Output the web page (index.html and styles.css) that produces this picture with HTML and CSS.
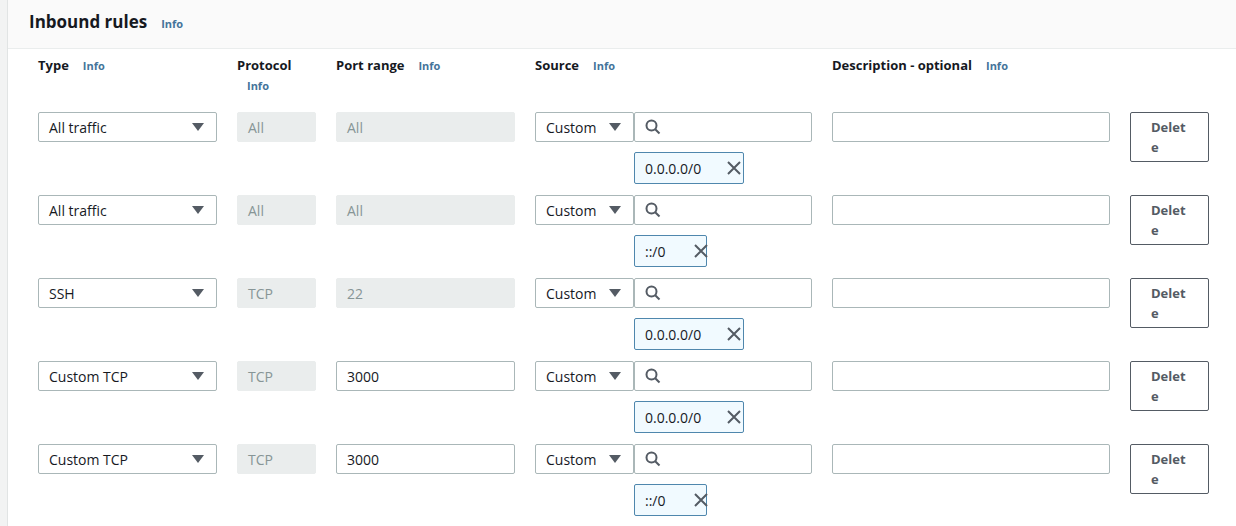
FILE: index.html
```html
<!DOCTYPE html>
<html>
<head>
<meta charset="utf-8">
<link rel="stylesheet" href="styles.css">
</head>
<body>
<div class="panel">
  <div class="panel-head">
    <h2 class="title">Inbound rules</h2><a class="info info-head">Info</a>
  </div>
  <div class="rules">
    <div class="grid header">
      <div class="hcell"><span class="hlabel">Type</span><a class="info">Info</a></div>
      <div class="hcell stack"><span class="hlabel">Protocol</span><a class="info info-under">Info</a></div>
      <div class="hcell"><span class="hlabel">Port range</span><a class="info">Info</a></div>
      <div class="hcell"><span class="hlabel">Source</span><a class="info">Info</a></div>
      <div class="hcell"><span class="hlabel">Description - optional</span><a class="info">Info</a></div>
      <div></div>
    </div>

    <div class="grid row">
      <div class="select"><span>All traffic</span><span class="caret"></span></div>
      <div class="field disabled">All</div>
      <div class="field disabled">All</div>
      <div class="source">
        <div class="source-line">
          <div class="select src-select"><span>Custom</span><span class="caret"></span></div>
          <div class="field search"><svg width="16" height="16" viewBox="0 0 16 16"><circle cx="6.5" cy="6.5" r="5" fill="none" stroke="#545b64" stroke-width="2"/><line x1="10.2" y1="10.2" x2="14.5" y2="14.5" stroke="#545b64" stroke-width="2"/></svg></div>
        </div>
        <div class="chip"><span>0.0.0.0/0</span><svg class="x" width="16" height="16" viewBox="0 0 16 16"><path d="M2 2 L14 14 M14 2 L2 14" stroke="#545b64" stroke-width="2" fill="none"/></svg></div>
      </div>
      <div class="field"></div>
      <button class="delete"><span>Delete</span></button>
    </div>

    <div class="grid row">
      <div class="select"><span>All traffic</span><span class="caret"></span></div>
      <div class="field disabled">All</div>
      <div class="field disabled">All</div>
      <div class="source">
        <div class="source-line">
          <div class="select src-select"><span>Custom</span><span class="caret"></span></div>
          <div class="field search"><svg width="16" height="16" viewBox="0 0 16 16"><circle cx="6.5" cy="6.5" r="5" fill="none" stroke="#545b64" stroke-width="2"/><line x1="10.2" y1="10.2" x2="14.5" y2="14.5" stroke="#545b64" stroke-width="2"/></svg></div>
        </div>
        <div class="chip short"><span>::/0</span><svg class="x" width="16" height="16" viewBox="0 0 16 16"><path d="M2 2 L14 14 M14 2 L2 14" stroke="#545b64" stroke-width="2" fill="none"/></svg></div>
      </div>
      <div class="field"></div>
      <button class="delete"><span>Delete</span></button>
    </div>

    <div class="grid row">
      <div class="select"><span>SSH</span><span class="caret"></span></div>
      <div class="field disabled">TCP</div>
      <div class="field disabled">22</div>
      <div class="source">
        <div class="source-line">
          <div class="select src-select"><span>Custom</span><span class="caret"></span></div>
          <div class="field search"><svg width="16" height="16" viewBox="0 0 16 16"><circle cx="6.5" cy="6.5" r="5" fill="none" stroke="#545b64" stroke-width="2"/><line x1="10.2" y1="10.2" x2="14.5" y2="14.5" stroke="#545b64" stroke-width="2"/></svg></div>
        </div>
        <div class="chip"><span>0.0.0.0/0</span><svg class="x" width="16" height="16" viewBox="0 0 16 16"><path d="M2 2 L14 14 M14 2 L2 14" stroke="#545b64" stroke-width="2" fill="none"/></svg></div>
      </div>
      <div class="field"></div>
      <button class="delete"><span>Delete</span></button>
    </div>

    <div class="grid row">
      <div class="select"><span>Custom TCP</span><span class="caret"></span></div>
      <div class="field disabled">TCP</div>
      <div class="field">3000</div>
      <div class="source">
        <div class="source-line">
          <div class="select src-select"><span>Custom</span><span class="caret"></span></div>
          <div class="field search"><svg width="16" height="16" viewBox="0 0 16 16"><circle cx="6.5" cy="6.5" r="5" fill="none" stroke="#545b64" stroke-width="2"/><line x1="10.2" y1="10.2" x2="14.5" y2="14.5" stroke="#545b64" stroke-width="2"/></svg></div>
        </div>
        <div class="chip"><span>0.0.0.0/0</span><svg class="x" width="16" height="16" viewBox="0 0 16 16"><path d="M2 2 L14 14 M14 2 L2 14" stroke="#545b64" stroke-width="2" fill="none"/></svg></div>
      </div>
      <div class="field"></div>
      <button class="delete"><span>Delete</span></button>
    </div>

    <div class="grid row">
      <div class="select"><span>Custom TCP</span><span class="caret"></span></div>
      <div class="field disabled">TCP</div>
      <div class="field">3000</div>
      <div class="source">
        <div class="source-line">
          <div class="select src-select"><span>Custom</span><span class="caret"></span></div>
          <div class="field search"><svg width="16" height="16" viewBox="0 0 16 16"><circle cx="6.5" cy="6.5" r="5" fill="none" stroke="#545b64" stroke-width="2"/><line x1="10.2" y1="10.2" x2="14.5" y2="14.5" stroke="#545b64" stroke-width="2"/></svg></div>
        </div>
        <div class="chip short"><span>::/0</span><svg class="x" width="16" height="16" viewBox="0 0 16 16"><path d="M2 2 L14 14 M14 2 L2 14" stroke="#545b64" stroke-width="2" fill="none"/></svg></div>
      </div>
      <div class="field"></div>
      <button class="delete"><span>Delete</span></button>
    </div>
  </div>
</div>
</body>
</html>
```
FILE: styles.css
```css
html, body {
  margin: 0;
  padding: 0;
}
body {
  background: #f2f3f3;
  font-family: "Open Sans", Lato, sans-serif;
  color: #16191f;
  width: 1236px;
  height: 526px;
  overflow: hidden;
}
.panel {
  margin-left: 7px;
  border-left: 1px solid #e1e4e4;
  background: #ffffff;
  height: 526px;
}
.panel-head {
  height: 49px;
  background: #fafafa;
  border-bottom: 1px solid #eaeded;
  display: flex;
  align-items: center;
  padding-left: 21px;
  padding-bottom: 6px;
  box-sizing: border-box;
}
.title {
  margin: 0;
  font-size: 17px;
  font-weight: 700;
  color: #16191f;
}
.info {
  font-size: 11px;
  font-weight: 700;
  color: #44749a;
  margin-left: 14px;
}
.info-head {
  margin-left: 14px;
  padding-top: 4px;
}
.rules {
  padding: 8px 0 0 30px;
}
.grid {
  display: grid;
  grid-template-columns: 179px 79px 179px 277px 278px 79px;
  column-gap: 20px;
}
.header {
  height: 55px;
}
.hcell {
  display: flex;
  align-items: baseline;
  line-height: 16px;
}
.hcell.stack {
  flex-direction: column;
  align-items: flex-start;
}
.hlabel {
  font-size: 13px;
  font-weight: 700;
  color: #16191f;
}
.info-under {
  margin-left: 10px;
  margin-top: 5px;
}
.row {
  height: 83px;
  align-items: start;
}
.select, .field {
  height: 30px;
  box-sizing: border-box;
  border: 1px solid #aab7b8;
  border-radius: 2px;
  background: #fff;
  font-size: 14px;
  display: flex;
  align-items: center;
  padding: 0 10px;
  color: #16191f;
}
.select {
  justify-content: space-between;
}
.caret {
  width: 0;
  height: 0;
  border-left: 6px solid transparent;
  border-right: 6px solid transparent;
  border-top: 8px solid #545b64;
  margin-right: 2px;
}
.field.disabled {
  background: #eaeded;
  border-color: #eaeded;
  color: #879596;
}
.source {
  display: flex;
  flex-direction: column;
}
.source-line {
  display: flex;
}
.src-select {
  width: 99px;
  padding-right: 10px;
}
.search {
  flex: 1;
  padding-left: 10px;
}
.chip {
  margin-left: 99px;
  margin-top: 10px;
  width: 110px;
  height: 32px;
  box-sizing: border-box;
  border: 1px solid #4f87ad;
  border-radius: 2px;
  background: #f1faff;
  display: flex;
  align-items: center;
  justify-content: space-between;
  padding: 0 1px 0 10px;
  font-size: 14px;
  color: #16191f;
}
.chip.short {
  width: 73px;
  padding-right: 0;
}
.chip.short .x {
  margin-right: -3px;
}
.delete {
  height: 50px;
  width: 79px;
  box-sizing: border-box;
  border: 1px solid #545b64;
  border-radius: 2px;
  background: #fff;
  padding: 4px 10px 0 20px;
  font-family: "Open Sans", Lato, sans-serif;
  font-size: 13px;
  font-weight: 700;
  color: #545b64;
  text-align: left;
  display: flex;
  align-items: flex-start;
}
.delete span {
  display: block;
  width: 40px;
  word-break: break-all;
  line-height: 20px;
}
```
